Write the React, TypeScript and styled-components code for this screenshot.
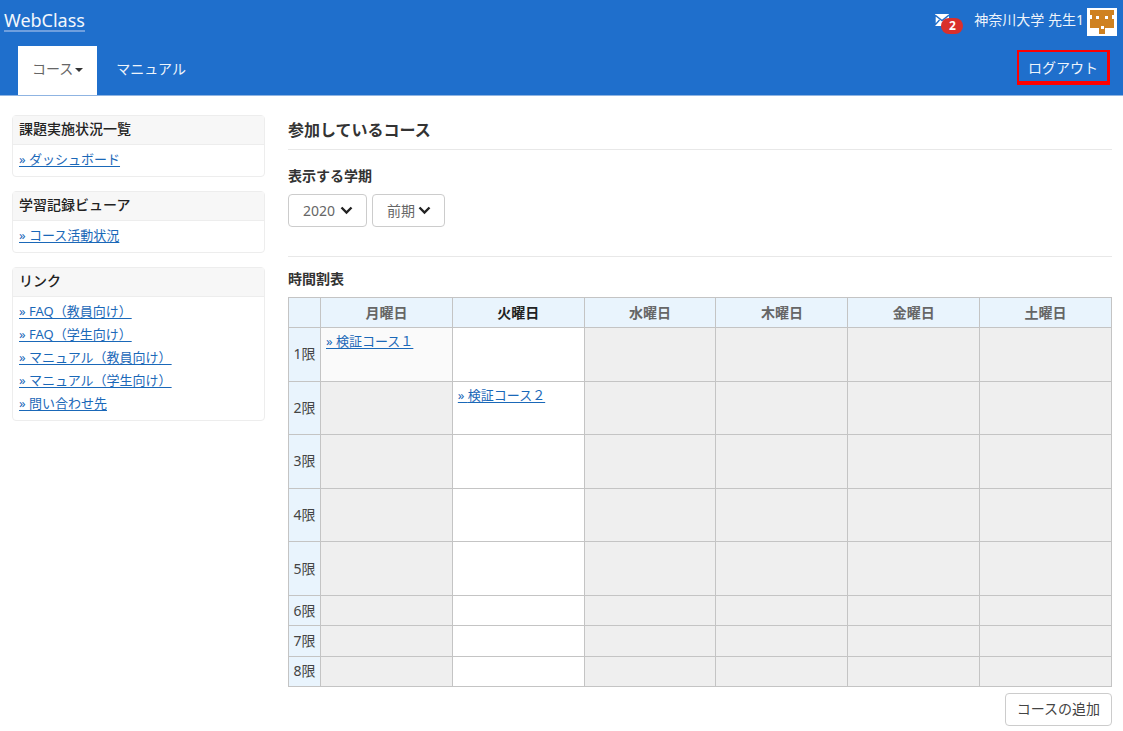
import React from 'react';
import styled, { createGlobalStyle } from 'styled-components';

const GlobalStyle = createGlobalStyle`
  *, *::before, *::after { box-sizing: border-box; }
  body {
    margin: 0;
    background: #fff;
    color: #333;
    font: 14px/20px "Noto Sans", "Noto Sans CJK JP", sans-serif;
  }
`;

const Header = styled.header`
  background: #1f6fcc;
  border-bottom: 1px solid #8fb4e2;
  color: #fff;
`;

const TopBar = styled.div`
  display: flex;
  justify-content: space-between;
  align-items: center;
  height: 46px;
  padding: 0 6px 2px 4px;
`;

const Brand = styled.a`
  margin-bottom: 2px;
  border-bottom: 2px solid #6f9fde;
  color: #f3f7fc;
  font-size: 18px;
  line-height: 20px;
  text-decoration: none;
`;

const Account = styled.div`
  display: flex;
  align-items: center;
  gap: 3px;
  color: #eef4fb;
`;

const UserName = styled.span`
  margin-bottom: 4px;
`;

const MailLink = styled.a`
  position: relative;
  display: block;
  width: 28px;
  height: 20px;
  margin: 3px 8px 0 0;
  svg { display: block; }
`;

const Badge = styled.span`
  position: absolute;
  right: 0;
  bottom: 0;
  width: 22px;
  height: 16px;
  border-radius: 8px;
  background: #d9302c;
  color: #fff;
  font-size: 12px;
  font-weight: 700;
  line-height: 16px;
  text-align: center;
`;

const Nav = styled.nav`
  display: flex;
  align-items: stretch;
  height: 49px;
  padding: 0 13px 0 18px;
`;

const NavLink = styled.a<{ $active?: boolean }>`
  display: flex;
  align-items: center;
  gap: 2px;
  padding: 0 14px 4px;
  margin-right: 5px;
  background: ${(p) => (p.$active ? '#fff' : 'transparent')};
  color: ${(p) => (p.$active ? '#666' : '#eef4fb')};
  text-decoration: none;
`;

const Caret = styled.span`
  margin-top: 3px;
  border: 4px solid transparent;
  border-top-color: #333;
  border-bottom: 0;
`;

const Logout = styled.a`
  align-self: flex-start;
  margin: 4px 0 0 auto;
  padding: 6px 9px 3px;
  border: solid #f00;
  border-width: 2px 3px 4px 2px;
  color: #eef4fb;
  text-decoration: none;
`;

const Page = styled.div`
  display: grid;
  grid-template-columns: 253px minmax(0, 1fr);
  gap: 23px;
  padding: 19px 11px 5px 12px;
`;

const Sidebar = styled.aside`
  display: flex;
  flex-direction: column;
  gap: 14px;
`;

const Panel = styled.section`
  border: 1px solid #ededed;
  border-radius: 4px;
`;

const PanelTitle = styled.h2`
  margin: 0;
  padding: 3px 6px 5px;
  border-bottom: 1px solid #ededed;
  background: #f7f7f7;
  font-size: 14px;
  font-weight: 500;
  line-height: 20px;
  color: #222;
`;

const LinkList = styled.ul`
  list-style: none;
  margin: 0;
  padding: 3px 6px 5px;
  font-size: 13px;
  line-height: 23px;
`;

const TextLink = styled.a`
  color: #1a68b8;
  text-decoration: underline;
  text-underline-offset: 2px;
`;

const Main = styled.main``;

const Title = styled.h1`
  margin: 0 0 16px;
  padding: 3px 0 7px;
  border-bottom: 1px solid #e8e8e8;
  font-size: 16px;
  font-weight: 700;
  line-height: 24px;
`;

const Subtitle = styled.h2`
  margin: 0;
  font-size: 14px;
  font-weight: 700;
  line-height: 20px;
`;

const Terms = styled.form`
  display: flex;
  gap: 5px;
  padding: 8px 0 29px;
  margin-bottom: 12px;
  border-bottom: 1px solid #e8e8e8;
`;

const Picker = styled.label`
  position: relative;
  svg {
    position: absolute;
    right: 14px;
    top: 12px;
    pointer-events: none;
  }
`;

const Select = styled.select<{ $width: number }>`
  appearance: none;
  display: block;
  width: ${(p) => p.$width}px;
  height: 33px;
  padding: 0 14px;
  border: 1px solid #ccc;
  border-radius: 4px;
  background: #fff;
  color: #666;
  font: inherit;
`;

const Timetable = styled.table`
  width: 100%;
  height: 390px;
  margin-top: 8px;
  border-collapse: collapse;
  table-layout: fixed;
  th, td { border: 1px solid #c4c4c4; }
`;

const HourCol = styled.col`
  width: 32px;
`;

const DayHead = styled.th<{ $today?: boolean }>`
  height: 30px;
  padding: 0;
  background: #e9f4fd;
  color: ${(p) => (p.$today ? '#222' : '#666')};
  font-weight: 700;
`;

const HourHead = styled.th`
  padding: 0;
  background: #e9f4fd;
  color: #444;
  font-weight: 400;
`;

const Row = styled.tr<{ $tall: boolean }>`
  height: ${(p) => (p.$tall ? 53 : 30)}px;
`;

const Slot = styled.td<{ $fill: string }>`
  padding: 3px 5px;
  background: ${(p) => p.$fill};
  vertical-align: top;
  font-size: 13px;
`;

const Actions = styled.div`
  display: flex;
  justify-content: flex-end;
  padding-top: 6px;
`;

const Button = styled.button`
  height: 33px;
  padding: 0 11px 2px;
  border: 1px solid #ccc;
  border-radius: 4px;
  background: #fff;
  color: #444;
  font: inherit;
`;

const panels = [
  { title: '課題実施状況一覧', links: ['ダッシュボード'] },
  { title: '学習記録ビューア', links: ['コース活動状況'] },
  {
    title: 'リンク',
    links: ['FAQ（教員向け）', 'FAQ（学生向け）', 'マニュアル（教員向け）', 'マニュアル（学生向け）', '問い合わせ先'],
  },
];

const days = ['月曜日', '火曜日', '水曜日', '木曜日', '金曜日', '土曜日'];
const today = 1;
const hours = [1, 2, 3, 4, 5, 6, 7, 8];
const courses: Record<string, string> = { '1-0': '検証コース１', '2-1': '検証コース２' };

const slotFill = (hour: number, day: number) => {
  if (day === today) return '#fff';
  return courses[`${hour}-${day}`] ? '#fafafa' : '#efefef';
};

const Chevron = () => (
  <svg width="13" height="9" viewBox="0 0 13 9" aria-hidden="true">
    <path d="M1.5 1.5 6.5 6.5 11.5 1.5" fill="none" stroke="#222" strokeWidth="2.4" />
  </svg>
);

const MailIcon = () => (
  <svg width="14" height="12" viewBox="0 0 14 12" aria-hidden="true">
    <path d="M0 0h14v12H0z" fill="#fff" />
    <path d="M0 1l7 5.5L14 1M0 2v9l4.5-5M14 11l-4.5-5" fill="none" stroke="#1f6fcc" strokeWidth="1.4" />
  </svg>
);

const Avatar = () => (
  <svg width="30" height="28" viewBox="0 0 30 28" role="img" aria-label="ユーザー">
    <path d="M0 0h30v28H0z" fill="#fff" />
    <path d="M3 2h24v5h-2v4h2v9h-9v6h-6v-6H3v-9h2V7H3z" fill="#cf8120" />
    <path d="M9 8h3v3H9zM18 8h3v3h-3zM14 18h3v3h-3z" fill="#fff" />
  </svg>
);

export default function App() {
  return (
    <>
      <GlobalStyle />
      <Header>
        <TopBar>
          <Brand href="#">WebClass</Brand>
          <Account>
            <MailLink href="#" aria-label="メッセージ">
              <MailIcon />
              <Badge>2</Badge>
            </MailLink>
            <UserName>神奈川大学 先生1</UserName>
            <Avatar />
          </Account>
        </TopBar>
        <Nav>
          <NavLink href="#" $active>コース<Caret /></NavLink>
          <NavLink href="#">マニュアル</NavLink>
          <Logout href="#">ログアウト</Logout>
        </Nav>
      </Header>
      <Page>
        <Sidebar>
          {panels.map((panel) => (
            <Panel key={panel.title}>
              <PanelTitle>{panel.title}</PanelTitle>
              <LinkList>
                {panel.links.map((link) => (
                  <li key={link}><TextLink href="#">» {link}</TextLink></li>
                ))}
              </LinkList>
            </Panel>
          ))}
        </Sidebar>
        <Main>
          <Title>参加しているコース</Title>
          <Subtitle>表示する学期</Subtitle>
          <Terms>
            <Picker>
              <Select $width={79} aria-label="年度"><option>2020</option></Select>
              <Chevron />
            </Picker>
            <Picker>
              <Select $width={73} aria-label="学期"><option>前期</option></Select>
              <Chevron />
            </Picker>
          </Terms>
          <Subtitle>時間割表</Subtitle>
          <Timetable>
            <colgroup>
              <HourCol />
              {days.map((d) => <col key={d} />)}
            </colgroup>
            <thead>
              <tr>
                <DayHead />
                {days.map((d, i) => <DayHead key={d} scope="col" $today={i === today}>{d}</DayHead>)}
              </tr>
            </thead>
            <tbody>
              {hours.map((h) => (
                <Row key={h} $tall={h <= 5}>
                  <HourHead scope="row">{h}限</HourHead>
                  {days.map((d, i) => {
                    const course = courses[`${h}-${i}`];
                    return (
                      <Slot key={d} $fill={slotFill(h, i)}>
                        {course && <TextLink href="#">» {course}</TextLink>}
                      </Slot>
                    );
                  })}
                </Row>
              ))}
            </tbody>
          </Timetable>
          <Actions>
            <Button type="button">コースの追加</Button>
          </Actions>
        </Main>
      </Page>
    </>
  );
}
